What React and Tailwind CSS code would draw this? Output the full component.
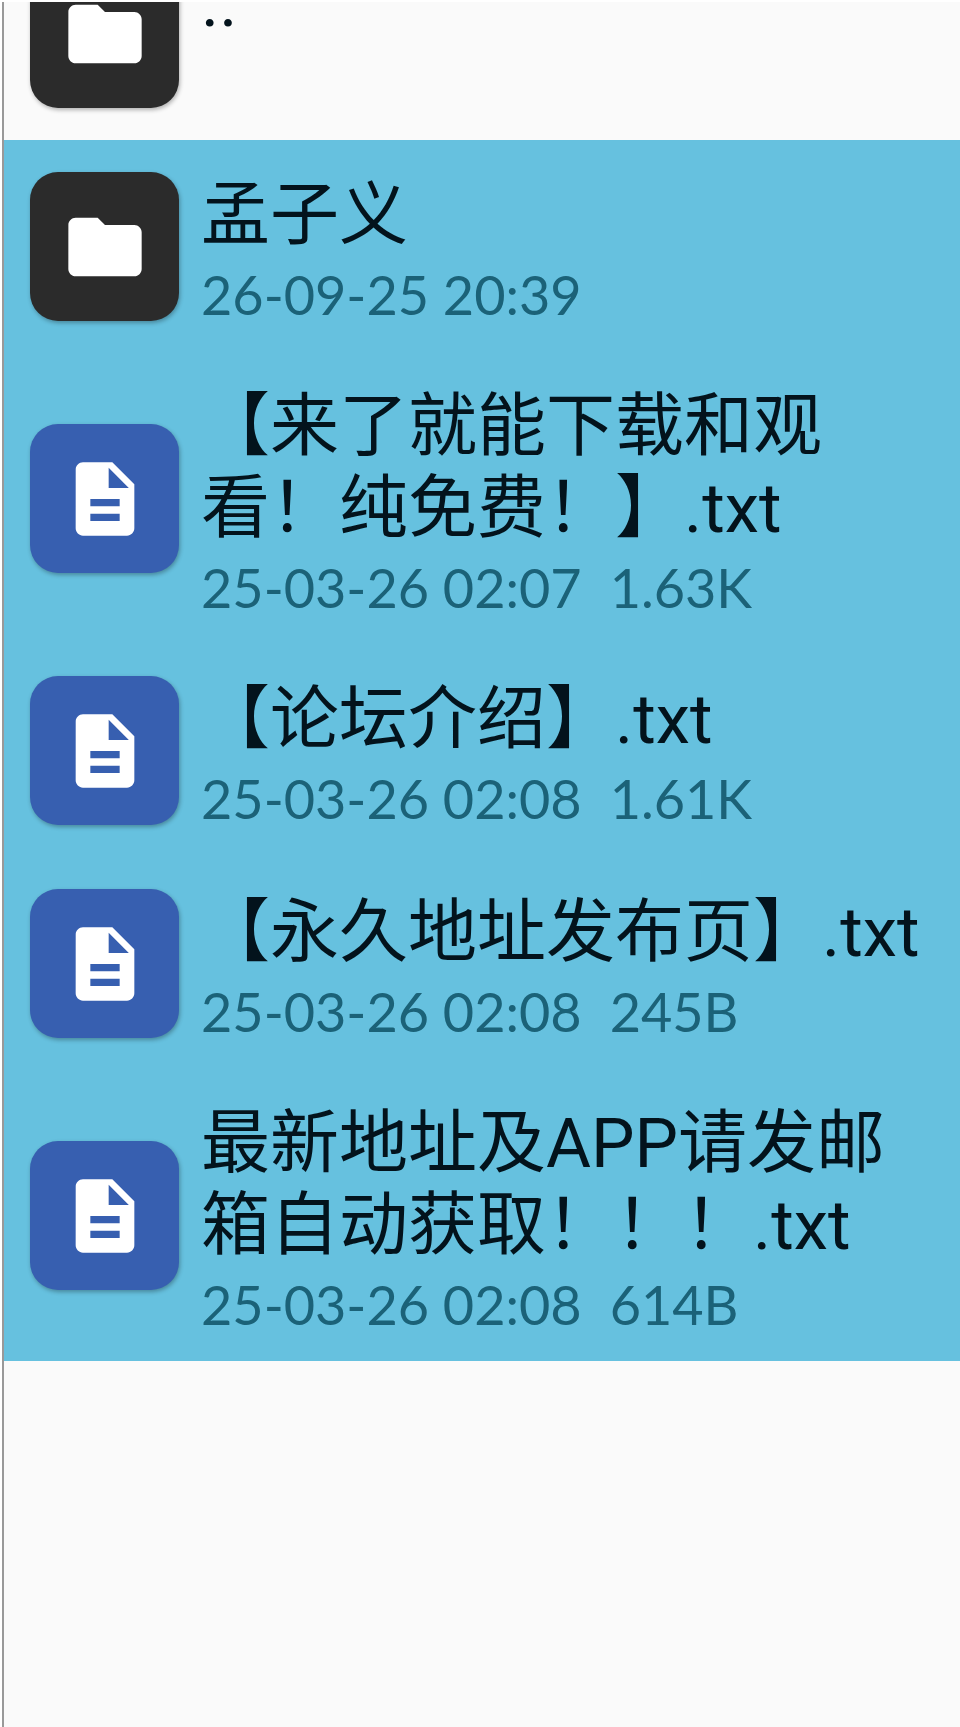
import React from "react";
import { MdDescription, MdFolder } from "react-icons/md";

const files = [
  { id: 1, type: "folder", name: "孟子义", date: "26-09-25 20:39" },
  {
    id: 2,
    type: "text",
    name: "【来了就能下载和观看！纯免费！】.txt",
    date: "25-03-26 02:07",
    size: "1.63K",
  },
  {
    id: 3,
    type: "text",
    name: "【论坛介绍】.txt",
    date: "25-03-26 02:08",
    size: "1.61K",
  },
  {
    id: 4,
    type: "text",
    name: "【永久地址发布页】.txt",
    date: "25-03-26 02:08",
    size: "245B",
  },
  {
    id: 5,
    type: "text",
    name: "最新地址及APP请发邮箱自动获取！！！.txt",
    date: "25-03-26 02:08",
    size: "614B",
  },
];

const FileIcon = ({ type }) => {
  const isFolder = type === "folder";
  const Icon = isFolder ? MdFolder : MdDescription;

  return (
    <div
      className={`my-8 flex size-[149px] shrink-0 items-center justify-center rounded-[28px] text-white shadow-[1px_2px_4px_rgba(0,0,0,0.3)] ${
        isFolder ? "bg-[#2b2b2b]" : "bg-[#375fb0]"
      }`}
    >
      <Icon className="size-[88px]" />
    </div>
  );
};

const FileRow = ({ file }) => (
  <div className="flex items-center gap-[22px] pr-6 pl-[26px]">
    <FileIcon type={file.type} />
    <div className="min-w-0 flex-1 pt-[33px] pb-[18px]">
      <p className="font-['Roboto','Noto_Sans_CJK_SC',sans-serif] text-[69px] leading-[82px] text-[#03131c]">
        {file.name}
      </p>
      <p className="flex h-[76px] gap-7 font-['Lato',sans-serif] text-[54px] leading-[76px] text-[#1b6278]">
        <span>{file.date}</span>
        {file.size && <span>{file.size}</span>}
      </p>
    </div>
  </div>
);

const App = () => {
  return (
    <main lang="zh-CN" className="min-h-screen bg-white pt-0.5 pl-0.5">
      <div className="flex min-h-[calc(100vh-2px)] flex-col border-l-2 border-[#999999] bg-[#fafafa]">
        {/* Parent folder, scrolled partly out of view */}
        <div className="flex h-[138px] flex-col justify-end overflow-hidden">
          <FileRow file={{ type: "folder", name: ".." }} />
        </div>

        {/* Selected files */}
        <ul className="bg-[#66c1df]">
          {files.map((file) => (
            <li key={file.id}>
              <FileRow file={file} />
            </li>
          ))}
        </ul>
      </div>
    </main>
  );
};

export default App;
